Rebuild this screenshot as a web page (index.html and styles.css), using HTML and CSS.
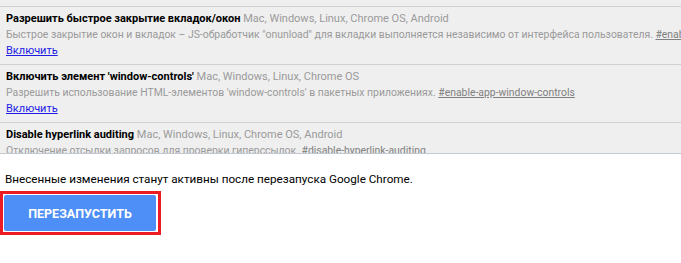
FILE: index.html
```
<!DOCTYPE html>
<html lang="ru">
<head>
    <meta charset="UTF-8">
    <title>Эксперименты</title>
    <link rel="stylesheet" href="styles.css">
</head>
<body>

    <!-- Experiments list -->
    <div class="experiments">
        <div class="experiment">
            <div class="experiment-name">Разрешить быстрое закрытие вкладок/окон <span class="platforms">Mac, Windows, Linux, Chrome OS, Android</span></div>
            <div class="experiment-desc">Быстрое закрытие окон и вкладок – JS-обработчик "onunload" для вкладки выполняется независимо от интерфейса пользователя. <a class="permalink" href="#">#enable-fast-unload</a></div>
            <div><a class="action" href="#">Включить</a></div>
        </div>
        <div class="experiment">
            <div class="experiment-name">Включить элемент 'window-controls' <span class="platforms">Mac, Windows, Linux, Chrome OS</span></div>
            <div class="experiment-desc">Разрешить использование HTML-элементов 'window-controls' в пакетных приложениях. <a class="permalink" href="#">#enable-app-window-controls</a></div>
            <div><a class="action" href="#">Включить</a></div>
        </div>
        <div class="experiment">
            <div class="experiment-name">Disable hyperlink auditing <span class="platforms">Mac, Windows, Linux, Chrome OS, Android</span></div>
            <div class="experiment-desc">Отключение отсылки запросов для проверки гиперссылок. <a class="permalink" href="#">#disable-hyperlink-auditing</a></div>
            <div><a class="action" href="#">Включить</a></div>
        </div>
    </div>

    <!-- Restart bar -->
    <div class="restart-bar">
        <p>Внесенные изменения станут активны после перезапуска Google Chrome.</p>
        <div class="highlight">
            <button class="restart-btn">Перезапустить</button>
        </div>
    </div>

</body>
</html>
```

FILE: styles.css
```
body {
    margin: 0;
    font-family: 'Roboto', sans-serif;
    background-color: #fff;
    overflow: hidden;
}

/* Experiments list */
.experiments {
    height: 147px;
    padding-top: 6px;
    overflow: hidden;
    background-color: #efefef;
    border-bottom: 1px solid #c3c9d1;
}

.experiment {
    border-top: 1px solid #d0d0d0;
    padding: 4px 6px 5px;
    font-size: 11px;
    line-height: 16px;
    white-space: nowrap;
}

.experiment-name {
    font-weight: bold;
    color: #000;
}

.platforms {
    font-weight: normal;
    color: #9a9a9a;
}

.experiment-desc {
    font-size: 10.4px;
    color: #9a9a9a;
}

.permalink {
    color: #808080;
}

.action {
    font-size: 11px;
    color: #1c1ce6;
}

/* Restart bar */
.restart-bar {
    padding-top: 16px;
}

.restart-bar p {
    margin: 0 0 3px 5px;
    font-size: 11.7px;
    line-height: 18px;
    color: #000;
}

.highlight {
    display: inline-block;
    border: 3px solid #ed1c24;
    padding: 1px 2px 1px 1px;
}

.restart-btn {
    display: block;
    width: 152px;
    height: 36px;
    border: none;
    border-radius: 2px;
    background-color: #4d8ff7;
    color: #fff;
    font-family: 'Roboto', sans-serif;
    font-size: 12.5px;
    font-weight: bold;
    text-transform: uppercase;
    cursor: pointer;
}
```
